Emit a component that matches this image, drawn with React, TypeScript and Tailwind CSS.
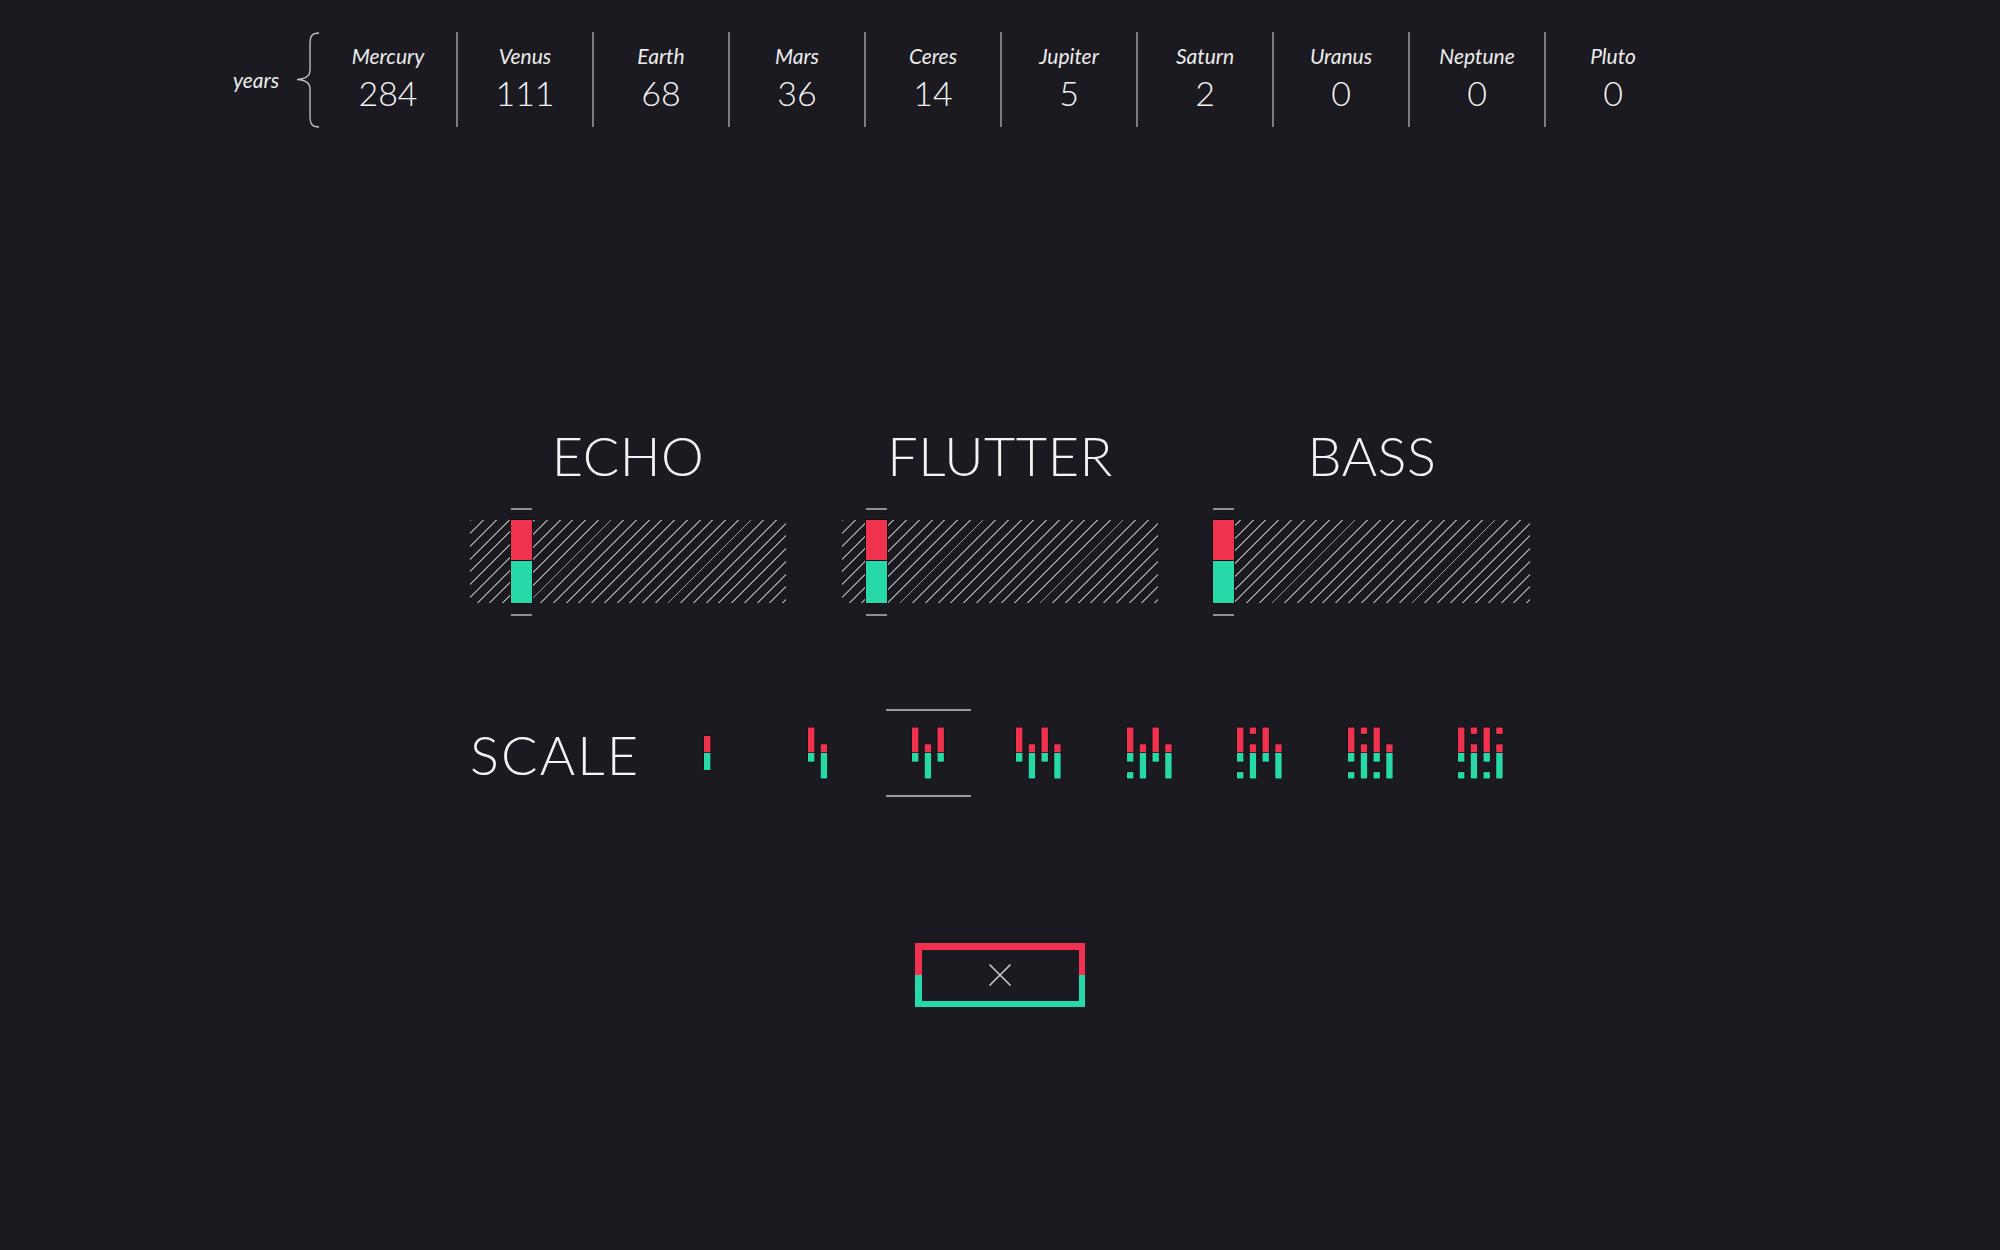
import { FC } from "react";

const RED = "#f0324e";
const GREEN = "#27d9a9";

const planets = [
  { name: "Mercury", years: 284 },
  { name: "Venus", years: 111 },
  { name: "Earth", years: 68 },
  { name: "Mars", years: 36 },
  { name: "Ceres", years: 14 },
  { name: "Jupiter", years: 5 },
  { name: "Saturn", years: 2 },
  { name: "Uranus", years: 0 },
  { name: "Neptune", years: 0 },
  { name: "Pluto", years: 0 },
];

const sliders = [
  { label: "ECHO", handle: "left-[41px]" },
  { label: "FLUTTER", handle: "left-[24px]" },
  { label: "BASS", handle: "left-[-1px]" },
];

type Col = { kind: "A" | "B" | "C"; top?: boolean; bottom?: boolean };

const scales: Col[][] = [
  [{ kind: "C" }],
  [{ kind: "A" }, { kind: "B" }],
  [{ kind: "A" }, { kind: "B" }, { kind: "A" }],
  [{ kind: "A" }, { kind: "B" }, { kind: "A" }, { kind: "B" }],
  [{ kind: "A", bottom: true }, { kind: "B" }, { kind: "A" }, { kind: "B" }],
  [{ kind: "A", bottom: true }, { kind: "B", top: true }, { kind: "A" }, { kind: "B" }],
  [
    { kind: "A", bottom: true },
    { kind: "B", top: true },
    { kind: "A", bottom: true },
    { kind: "B" },
  ],
  [
    { kind: "A", bottom: true },
    { kind: "B", top: true },
    { kind: "A", bottom: true },
    { kind: "B", top: true },
  ],
];

// bar geometry in screen px
const W = 6.4;
const P = 12.75;
const L = 25.5;
const S = 8.7;
const Q = 6.4;
const MID = 30;

const Bar: FC<{ x: number; y: number; h: number; fill: string }> = ({ x, y, h, fill }) => (
  <>
    <rect x={x - 0.7} y={y - 0.7} width={W + 1.4} height={h + 1.4} fill="#0e0e12" />
    <rect x={x} y={y} width={W} height={h} fill={fill} />
  </>
);

const ScaleIcon: FC<{ cols: Col[] }> = ({ cols }) => {
  const width = (cols.length - 1) * P + W + 2;
  return (
    <svg width={width} height={60} viewBox={`0 0 ${width} 60`}>
      {cols.map((c, i) => {
        const x = 1 + i * P;
        const up = c.kind === "A" ? L : c.kind === "B" ? S : 17;
        const down = c.kind === "A" ? S : c.kind === "B" ? L : 17;
        return (
          <g key={i}>
            <Bar x={x} y={MID - up} h={up} fill={RED} />
            <Bar x={x} y={MID} h={down} fill={GREEN} />
            {c.top && <Bar x={x} y={MID - L} h={Q} fill={RED} />}
            {c.bottom && <Bar x={x} y={MID + L - Q} h={Q} fill={GREEN} />}
          </g>
        );
      })}
    </svg>
  );
};

const Brace = () => (
  <svg width="24" height="96" viewBox="0 0 24 96" fill="none">
    <path
      d="M23 1 C16 1 14 4 14 12 V38 C14 44 10 47 1 47.5 C10 48 14 51 14 57 V84 C14 92 16 95 23 95"
      stroke="#c4c4c8"
      strokeWidth="1.3"
    />
  </svg>
);

export default function App() {
  return (
    <div className="min-h-[1250px] w-full bg-[#1b1a20] font-['Lato',sans-serif] text-[#f4f4f4]">
      {/* orbit counts */}
      <div className="flex justify-center pt-[32px]">
        <div className="flex h-[95px] w-[87px] items-center justify-between">
          <span className="text-[21px] italic leading-none text-[#ececec]">years</span>
          <Brace />
        </div>
        {planets.map((p, i) => (
          <div
            key={p.name}
            className={
              i > 0
                ? "flex h-[95px] w-[136px] flex-col items-center border-l-2 border-[#7c7c81] pt-[13px]"
                : "flex h-[95px] w-[136px] flex-col items-center pt-[13px]"
            }
          >
            <span className="text-[21px] italic leading-none text-[#ececec]">{p.name}</span>
            <span className="mt-[10px] text-[34px] font-light leading-none">{p.years}</span>
          </div>
        ))}
        <div className="w-[87px]" />
      </div>

      <div className="mx-auto mt-[302px] w-[1060px]">
        <div className="grid grid-cols-3 gap-[56px]">
          {sliders.map((s) => (
            <div key={s.label} className="flex flex-col">
              <h2 className="text-center text-[54px] font-light leading-none tracking-[0.01em]">
                {s.label}
              </h2>
              <div className="relative mt-[25px] h-[108px]">
                <div className="mt-[12px] h-[83px] bg-[image:repeating-linear-gradient(135deg,#97979b_0px,#97979b_1.4px,transparent_1.4px,transparent_9px)]" />
                <div className={`absolute top-0 flex w-[21px] flex-col ${s.handle}`}>
                  <div className="h-[2px] bg-[#8e8e93]" />
                  <div className="mt-[10px] h-[41px] bg-[#f0324e] shadow-[0_0_0_1px_#0e0e12]" />
                  <div className="h-[42px] bg-[#27d9a9] shadow-[0_0_0_1px_#0e0e12]" />
                  <div className="mt-[11px] h-[2px] bg-[#8e8e93]" />
                </div>
              </div>
            </div>
          ))}
        </div>

        <div className="mt-[93px] flex h-[88px] items-center">
          <div className="w-[182px] shrink-0 pt-[4px] text-[54px] font-light leading-none tracking-[0.04em]">
            SCALE
          </div>
          {scales.map((cols, i) => (
            <div key={i} className="flex h-full w-[110.5px] shrink-0 items-center justify-center">
              {i === 2 ? (
                <div className="flex h-[88px] w-[85px] items-center justify-center border-y-2 border-[#9a9a9f]">
                  <ScaleIcon cols={cols} />
                </div>
              ) : (
                <ScaleIcon cols={cols} />
              )}
            </div>
          ))}
        </div>

        <button className="mx-auto mt-[146px] block h-[64px] w-[170px] bg-[linear-gradient(to_bottom,#f0324e_50%,#27d9a9_50%)] p-[6.5px]">
          <span className="flex h-full w-full items-center justify-center bg-[#1b1a20]">
            <svg width="24" height="24" viewBox="0 0 24 24">
              <path d="M1.5 1.5 L22.5 22.5 M22.5 1.5 L1.5 22.5" stroke="#d2d2d4" strokeWidth="1.5" />
            </svg>
          </span>
        </button>
      </div>
    </div>
  );
}
